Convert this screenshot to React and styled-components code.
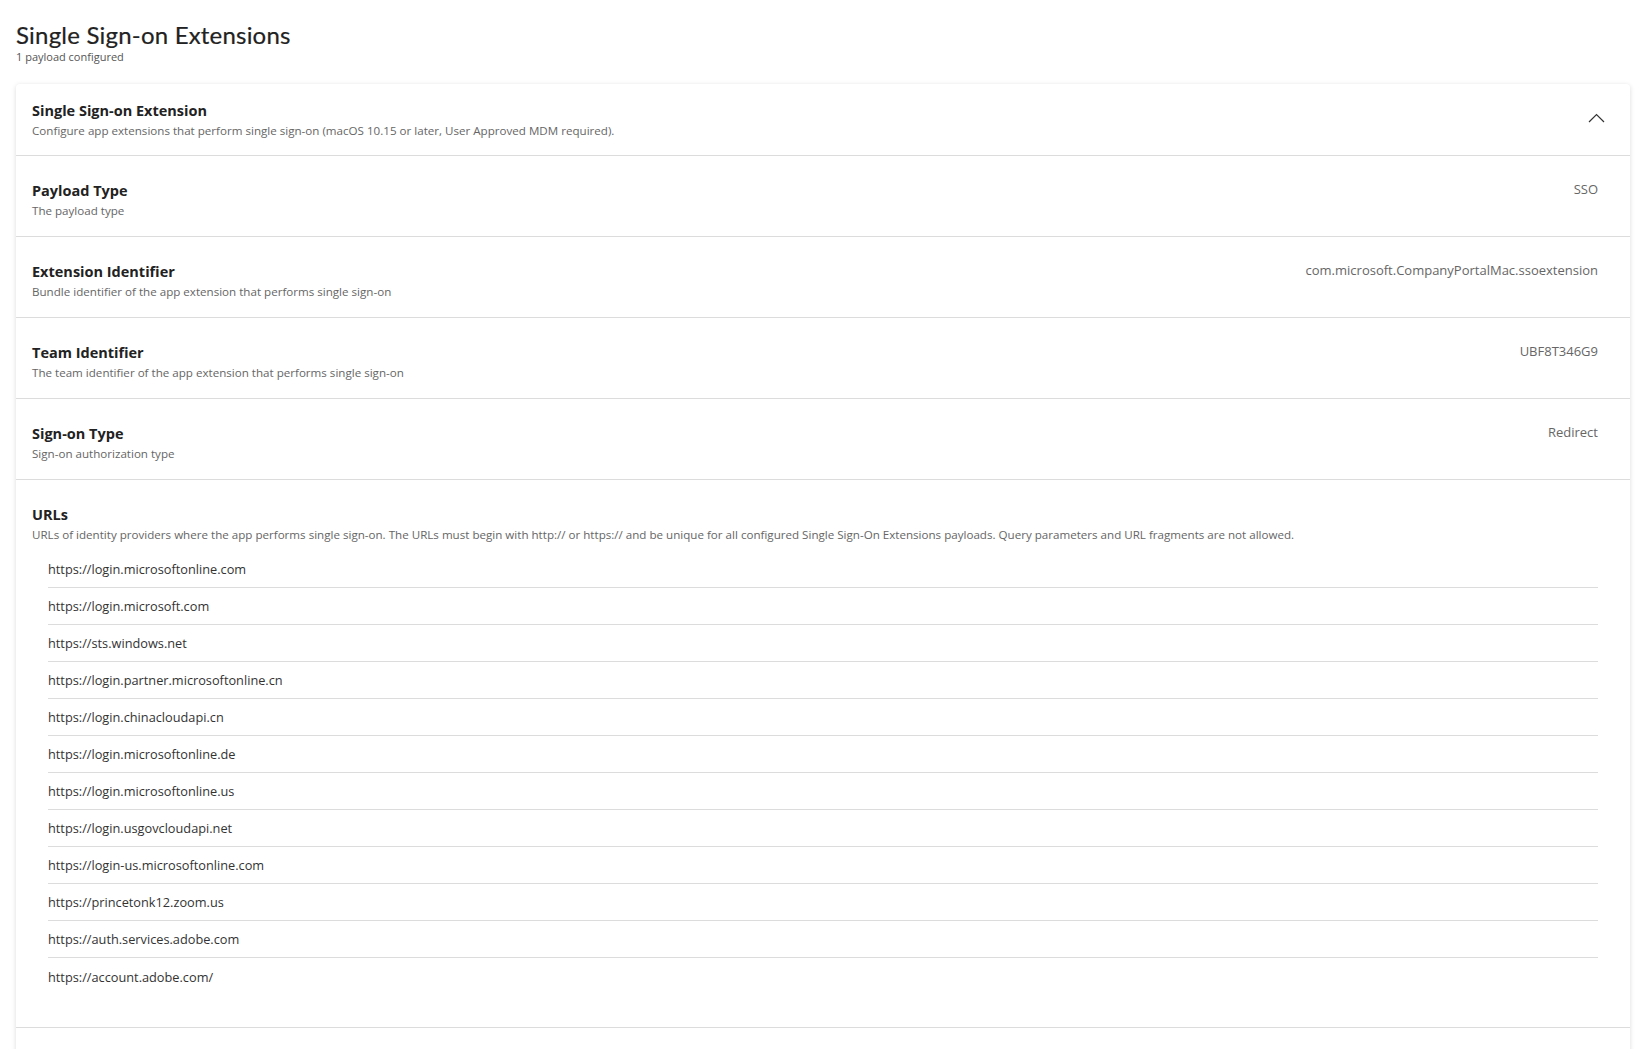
import styled, { createGlobalStyle } from "styled-components";

const GlobalStyle = createGlobalStyle`
  html, body {
    margin: 0;
    padding: 0;
    background: #ffffff;
  }

  body {
    font-family: "Open Sans", Lato, "Liberation Sans", sans-serif;
    color: #222222;
  }
`;

const fields = [
  { label: "Payload Type", hint: "The payload type", value: "SSO" },
  {
    label: "Extension Identifier",
    hint: "Bundle identifier of the app extension that performs single sign-on",
    value: "com.microsoft.CompanyPortalMac.ssoextension",
  },
  {
    label: "Team Identifier",
    hint: "The team identifier of the app extension that performs single sign-on",
    value: "UBF8T346G9",
  },
  { label: "Sign-on Type", hint: "Sign-on authorization type", value: "Redirect" },
];

const urls = [
  "https://login.microsoftonline.com",
  "https://login.microsoft.com",
  "https://sts.windows.net",
  "https://login.partner.microsoftonline.cn",
  "https://login.chinacloudapi.cn",
  "https://login.microsoftonline.de",
  "https://login.microsoftonline.us",
  "https://login.usgovcloudapi.net",
  "https://login-us.microsoftonline.com",
  "https://princetonk12.zoom.us",
  "https://auth.services.adobe.com",
  "https://account.adobe.com/",
];

export default function App() {
  return (
    <>
      <GlobalStyle />
      <Page>
        <PageHeader>
          <h1>Single Sign-on Extensions</h1>
          <p>1 payload configured</p>
        </PageHeader>

        <Card>
          <CardHeader>
            <FieldText>
              <Label>Single Sign-on Extension</Label>
              <Hint>
                Configure app extensions that perform single sign-on (macOS 10.15 or
                later, User Approved MDM required).
              </Hint>
            </FieldText>
            <Toggle aria-label="Collapse">
              <svg width="17" height="10" viewBox="0 0 17 10" fill="none">
                <path d="M1 9L8.5 1.5L16 9" stroke="#333" strokeWidth="1.2" />
              </svg>
            </Toggle>
          </CardHeader>

          {fields.map((f) => (
            <Row key={f.label}>
              <FieldText>
                <Label>{f.label}</Label>
                <Hint>{f.hint}</Hint>
              </FieldText>
              <Value>{f.value}</Value>
            </Row>
          ))}

          <UrlSection>
            <FieldText>
              <Label>URLs</Label>
              <Hint>
                URLs of identity providers where the app performs single sign-on. The
                URLs must begin with http:// or https:// and be unique for all configured
                Single Sign-On Extensions payloads. Query parameters and URL fragments
                are not allowed.
              </Hint>
            </FieldText>
            <UrlList>
              {urls.map((u) => (
                <UrlItem key={u}>{u}</UrlItem>
              ))}
            </UrlList>
          </UrlSection>

          <NextSection />
        </Card>
      </Page>
    </>
  );
}

const Page = styled.div`
  padding: 20px 10px 0 16px;
  height: 1049px;
  overflow: hidden;
  box-sizing: border-box;
`;

const PageHeader = styled.div`
  margin-bottom: 20px;

  h1 {
    margin: 0;
    font-family: Lato, "Open Sans", sans-serif;
    font-size: 24px;
    line-height: 30px;
    font-weight: 400;
    letter-spacing: 0.2px;
    color: #222;
    -webkit-text-stroke: 0.2px #222;
  }

  p {
    margin: 0;
    font-size: 11px;
    line-height: 14px;
    color: #555;
  }
`;

const Card = styled.div`
  background: #fff;
  border-radius: 4px;
  box-shadow: 0 1px 5px rgba(0, 0, 0, 0.14);
`;

const CardHeader = styled.div`
  display: flex;
  align-items: center;
  justify-content: space-between;
  padding: 17px 25px 16px 16px;
  border-bottom: 1px solid #dcdcdc;
`;

const Toggle = styled.button`
  display: flex;
  align-items: center;
  justify-content: center;
  border: none;
  background: none;
  padding: 0;
  margin-top: -5px;
  cursor: pointer;
`;

const FieldText = styled.div`
  display: flex;
  flex-direction: column;
  gap: 2px;
`;

const Label = styled.div`
  font-size: 14.5px;
  line-height: 20px;
  font-weight: 700;
  color: #222;
`;

const Hint = styled.div`
  font-size: 11.6px;
  line-height: 16px;
  color: #666;
`;

const Row = styled.div`
  display: flex;
  align-items: flex-start;
  justify-content: space-between;
  padding: 25px 32px 17px 16px;
  border-bottom: 1px solid #dcdcdc;
`;

const Value = styled.div`
  font-size: 13px;
  line-height: 20px;
  color: #666;
  margin-top: -2px;
`;

const UrlSection = styled.div`
  padding: 25px 32px 32px 16px;
  border-bottom: 1px solid #dcdcdc;
`;

const UrlList = styled.div`
  margin: 8px 0 0 16px;
`;

const UrlItem = styled.div`
  height: 37px;
  display: flex;
  align-items: center;
  font-size: 12.75px;
  color: #333;
  box-sizing: border-box;

  &:not(:last-child) {
    border-bottom: 1px solid #dcdcdc;
  }
`;

const NextSection = styled.div`
  height: 80px;
`;
